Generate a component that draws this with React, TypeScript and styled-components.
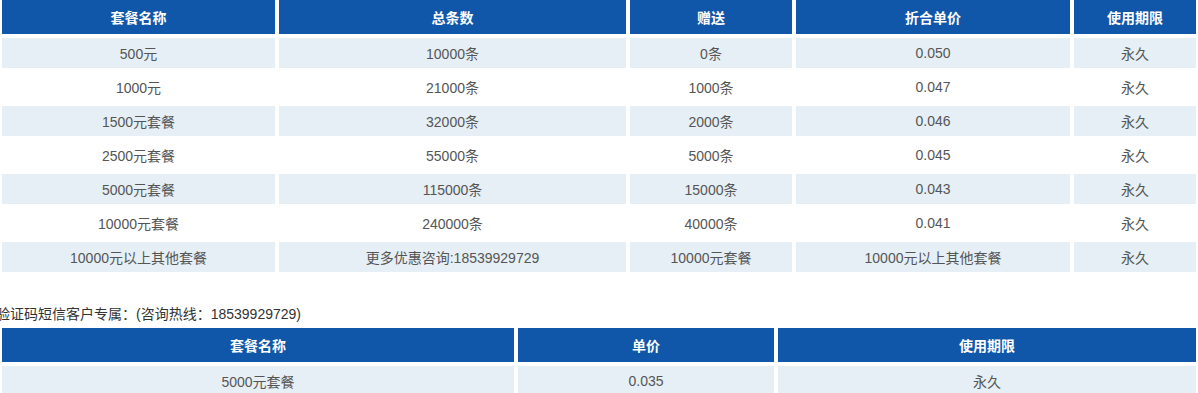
import styled, { createGlobalStyle } from "styled-components";

const GlobalStyle = createGlobalStyle`
  html, body {
    margin: 0;
    padding: 0;
    background: #fff;
    font-family: "Liberation Sans", "Noto Sans CJK SC", sans-serif;
  }
`;

const Page = styled.div`
  width: 1198px;
  overflow: hidden;
`;

const Grid = styled.div<{ $cols: string }>`
  display: grid;
  grid-template-columns: ${(p) => p.$cols};
  gap: 4px;
  padding: 0 2px;
`;

const HeadCell = styled.div`
  height: 34px;
  display: flex;
  align-items: center;
  justify-content: center;
  background: #1157a9;
  color: #fff;
  font-size: 14px;
  font-weight: bold;
`;

const Cell = styled.div<{ $shaded: boolean }>`
  height: 30px;
  display: flex;
  align-items: center;
  justify-content: center;
  background: ${(p) => (p.$shaded ? "#e5eff5" : "#fff")};
  color: #555;
  font-size: 14px;
`;

const Caption = styled.div`
  margin: 32px 0 4px -4px;
  height: 20px;
  line-height: 20px;
  font-size: 14px;
  color: #333;
  white-space: nowrap;
`;

const mainHead = ["套餐名称", "总条数", "赠送", "折合单价", "使用期限"];

const mainRows = [
  ["500元", "10000条", "0条", "0.050", "永久"],
  ["1000元", "21000条", "1000条", "0.047", "永久"],
  ["1500元套餐", "32000条", "2000条", "0.046", "永久"],
  ["2500元套餐", "55000条", "5000条", "0.045", "永久"],
  ["5000元套餐", "115000条", "15000条", "0.043", "永久"],
  ["10000元套餐", "240000条", "40000条", "0.041", "永久"],
  ["10000元以上其他套餐", "更多优惠咨询:18539929729", "10000元套餐", "10000元以上其他套餐", "永久"],
];

const codeHead = ["套餐名称", "单价", "使用期限"];
const codeRows = [["5000元套餐", "0.035", "永久"]];

const PriceTable = ({
  cols,
  head,
  rows,
}: {
  cols: string;
  head: string[];
  rows: string[][];
}) => (
  <Grid $cols={cols}>
    {head.map((h) => (
      <HeadCell key={h}>{h}</HeadCell>
    ))}
    {rows.map((row, i) =>
      row.map((c, j) => (
        <Cell key={`${i}-${j}`} $shaded={i % 2 === 0}>
          {c}
        </Cell>
      ))
    )}
  </Grid>
);

export default function App() {
  return (
    <Page>
      <GlobalStyle />
      <PriceTable cols="273px 347px 162px 274px 122px" head={mainHead} rows={mainRows} />
      <Caption>验证码短信客户专属：(咨询热线：18539929729)</Caption>
      <PriceTable cols="512px 256px 418px" head={codeHead} rows={codeRows} />
    </Page>
  );
}
